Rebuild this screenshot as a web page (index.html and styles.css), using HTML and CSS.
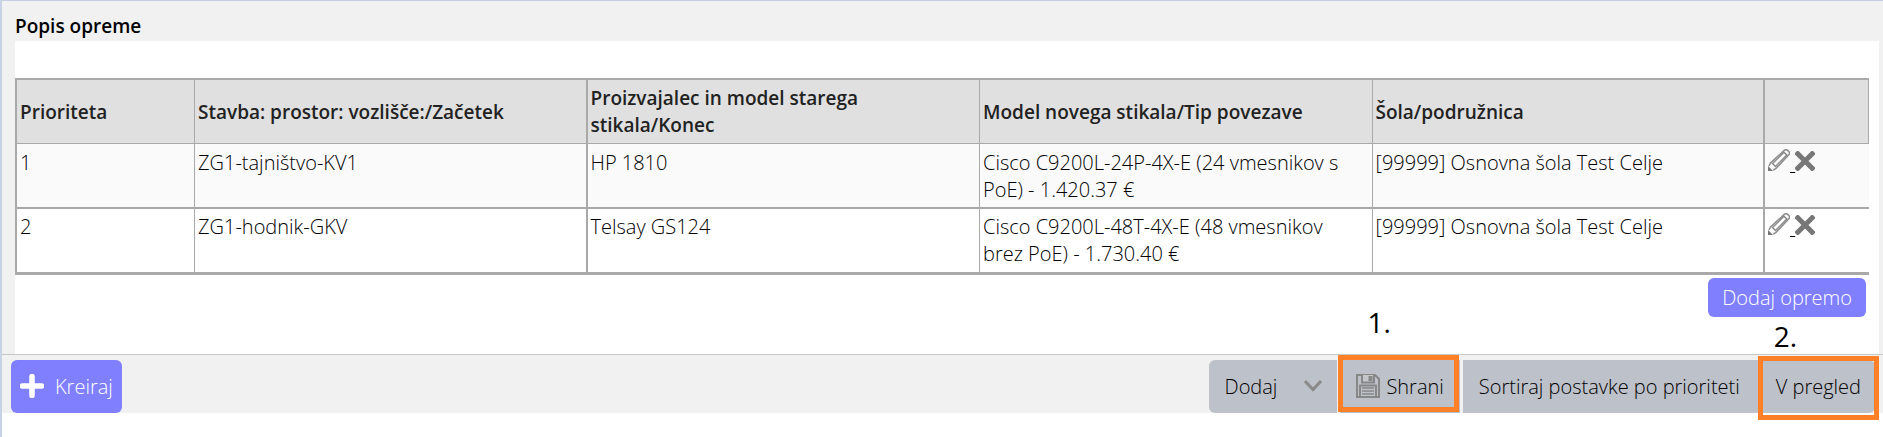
FILE: index.html
```html
<!DOCTYPE html>
<html lang="sl">
<head>
<meta charset="utf-8">
<meta name="viewport" content="width=device-width, initial-scale=1">
<title>Popis opreme</title>
<link rel="stylesheet" href="styles.css">
</head>
<body>
<svg class="defs" aria-hidden="true">
  <symbol id="pencil" viewBox="0 0 22 22">
    <path d="M0 22V17L5 22Z" fill="#777"/>
    <path d="M1 17L2.500 14L16.500 1.200Q18 0.200 19.500 1.200L21 2.700Q22 4 21 5.500L8 19.500L5 21.200" fill="none" stroke="#8c8c8c" stroke-width="1.500"/>
    <path d="M4.500 14.500L16 3.300L18.800 6.100L7.500 17.500Z" fill="none" stroke="#8c8c8c" stroke-width="1.500"/>
  </symbol>
  <symbol id="cross" viewBox="0 0 20 20">
    <path d="M1 1L19 19M19 1L1 19" stroke="#777" stroke-width="5" fill="none"/>
  </symbol>
</svg>
<main class="page">
  <section class="content">
    <h1 class="title">Popis opreme</h1>
    <div class="panel">
      <table class="grid">
        <colgroup>
          <col class="col-priority"><col class="col-wide"><col class="col-wide"><col class="col-wide"><col class="col-wide"><col class="col-actions">
        </colgroup>
        <thead>
          <tr>
            <th scope="col">Prioriteta</th>
            <th scope="col" class="thick">Stavba: prostor: vozlišče:/Začetek</th>
            <th scope="col">Proizvajalec in model starega stikala/Konec</th>
            <th scope="col">Model novega stikala/Tip povezave</th>
            <th scope="col" class="thick">Šola/podružnica</th>
            <th></th>
          </tr>
        </thead>
        <tbody>
          <tr>
            <td>1</td>
            <td class="thick">ZG1-tajništvo-KV1</td>
            <td>HP 1810</td>
            <td>Cisco C9200L-24P-4X-E (24 vmesnikov s PoE) - 1.420.37 €</td>
            <td class="thick">[99999] Osnovna šola Test Celje</td>
            <td><a class="action" href="#" aria-label="Uredi"><svg class="pencil"><use href="#pencil"/></svg>&nbsp;</a><a class="action" href="#" aria-label="Izbriši"><svg class="cross"><use href="#cross"/></svg></a></td>
          </tr>
          <tr>
            <td>2</td>
            <td class="thick">ZG1-hodnik-GKV</td>
            <td>Telsay GS124</td>
            <td>Cisco C9200L-48T-4X-E (48 vmesnikov brez PoE) - 1.730.40 €</td>
            <td class="thick">[99999] Osnovna šola Test Celje</td>
            <td><a class="action" href="#" aria-label="Uredi"><svg class="pencil"><use href="#pencil"/></svg>&nbsp;</a><a class="action" href="#" aria-label="Izbriši"><svg class="cross"><use href="#cross"/></svg></a></td>
          </tr>
        </tbody>
      </table>
      <div class="panel-actions">
        <button class="btn-add" type="button">Dodaj opremo</button>
      </div>
    </div>
  </section>
  <footer class="toolbar">
    <button class="btn-create" type="button">
      <svg class="plus" viewBox="0 0 24 24"><path d="M12 2.500V21.500M2.500 12H21.500" stroke="#fff" stroke-width="5.500" stroke-linecap="round"/></svg>
      Kreiraj
    </button>
    <div class="group">
      <button class="btn btn-menu" type="button">Dodaj
        <svg class="chevron" viewBox="0 0 18 12"><path d="M1 1L9 9.500L17 1" fill="none" stroke="#8a8a8a" stroke-width="3"/></svg>
      </button>
      <div class="step step-save">
        <span class="number">1.</span>
        <button class="btn btn-save" type="button">
          <svg class="disk" viewBox="0 0 24 24" fill="none" stroke="#868888" stroke-width="2">
            <path d="M1 1H19L23 5V23H1Z"/>
            <path d="M6 1V8.500H18V1" fill="#c3c6ca"/>
            <path d="M13.500 2V6H15.500V2"/>
            <path d="M4 23V11.500H20V23"/>
            <path d="M6 14H18M6 17H18M6 20H18" stroke-width="1.500"/>
          </svg>
          Shrani
        </button>
      </div>
      <button class="btn btn-sort" type="button">Sortiraj postavke po prioriteti</button>
      <div class="step step-review">
        <span class="number">2.</span>
        <button class="btn btn-last" type="button">V pregled</button>
      </div>
    </div>
  </footer>
</main>
</body>
</html>
```

FILE: styles.css
```css
* { box-sizing: border-box; }

body {
  margin: 0;
  background: #fff;
  color: #000;
  font: 300 20px/27px "Open Sans", "Noto Sans", sans-serif;
}

.defs { display: none; }

.page {
  min-height: 100vh;
  border-top: 1px solid #c6d0e4;
  border-left: 2px solid #c6d3e7;
}

.content {
  padding: 12px 4px 0 13px;
  background: #f1f1f1;
}

.title,
.grid th {
  font-size: 19px;
  font-weight: 600;
}

.title {
  margin: 0;
  padding-bottom: 1px;
}

.panel {
  padding: 37px 10px 37px 0;
  background: #fff;
}

.grid {
  width: 100%;
  table-layout: fixed;
  border-collapse: separate;
  border-spacing: 0;
  border: solid #a9a9a9;
  border-width: 2px 0 1px 2px;
}

.col-priority { width: 178px; }
.col-actions { width: 104px; }

.grid th,
.grid td {
  padding: 5px 8px 4px 3px;
  border: solid #a9a9a9;
  border-width: 0 1px 2px 0;
  text-align: left;
  vertical-align: top;
}

.grid th {
  border-bottom-width: 1px;
  background: #e0e0e0;
  color: #222;
  vertical-align: middle;
}

.grid .thick { border-right-width: 2px; }
.grid td:last-child { border-right: 0; }
.grid tbody tr:first-child td { background: #fafafa; }
.grid tbody tr:last-child td { padding-top: 4px; padding-bottom: 5px; }

.action {
  color: inherit;
  text-decoration-thickness: 1px;
}

.pencil { width: 22px; height: 22px; }
.cross { width: 20px; height: 20px; }

.panel-actions {
  display: flex;
  justify-content: flex-end;
  padding: 3px 3px 0 0;
}

button {
  border: 0;
  font: inherit;
  white-space: nowrap;
}

.btn-add {
  height: 39px;
  padding: 0 14px;
  border-radius: 6px;
  background: #8080ff;
  color: #fff;
}

.toolbar {
  display: flex;
  justify-content: space-between;
  padding: 5px 8px 0 9px;
  border-top: 1px solid #c8c8c8;
  background: #f1f1f1;
}

.btn-create {
  display: flex;
  align-items: center;
  gap: 11px;
  height: 53px;
  padding: 0 9px 1px;
  border-radius: 6px;
  background: #8080ff;
  color: #fff;
}

.plus { width: 24px; height: 24px; }

.group { display: flex; }

.btn {
  display: flex;
  align-items: center;
  height: 53px;
  padding: 0 16px 1px;
  background: #bdc1ca;
  color: #000;
}

.btn-menu {
  gap: 27px;
  margin-right: 3px;
  padding-right: 15px;
  border-radius: 6px 0 0 6px;
}

.btn-save {
  gap: 6px;
  margin-right: 3px;
}

.btn-sort { padding-right: 18px; }

.btn-last {
  padding: 0 14px 1px 18px;
  border-radius: 0 6px 6px 0;
}

.chevron { width: 18px; height: 12px; }
.disk { width: 24px; height: 24px; }

.step { position: relative; }

/* Walkthrough frames and step numbers drawn over the toolbar */
.step::after {
  content: "";
  position: absolute;
  inset: -5px 4px 1px -2px;
  border: 5px solid #ff8027;
  pointer-events: none;
}

.step-review::after { inset: -4px -4px -7px 0; }

.number {
  position: absolute;
  bottom: 75px;
  left: 27px;
  font-size: 28px;
  font-weight: 400;
  line-height: 32px;
}

.step-review .number {
  bottom: 61px;
  left: 16px;
}
```
